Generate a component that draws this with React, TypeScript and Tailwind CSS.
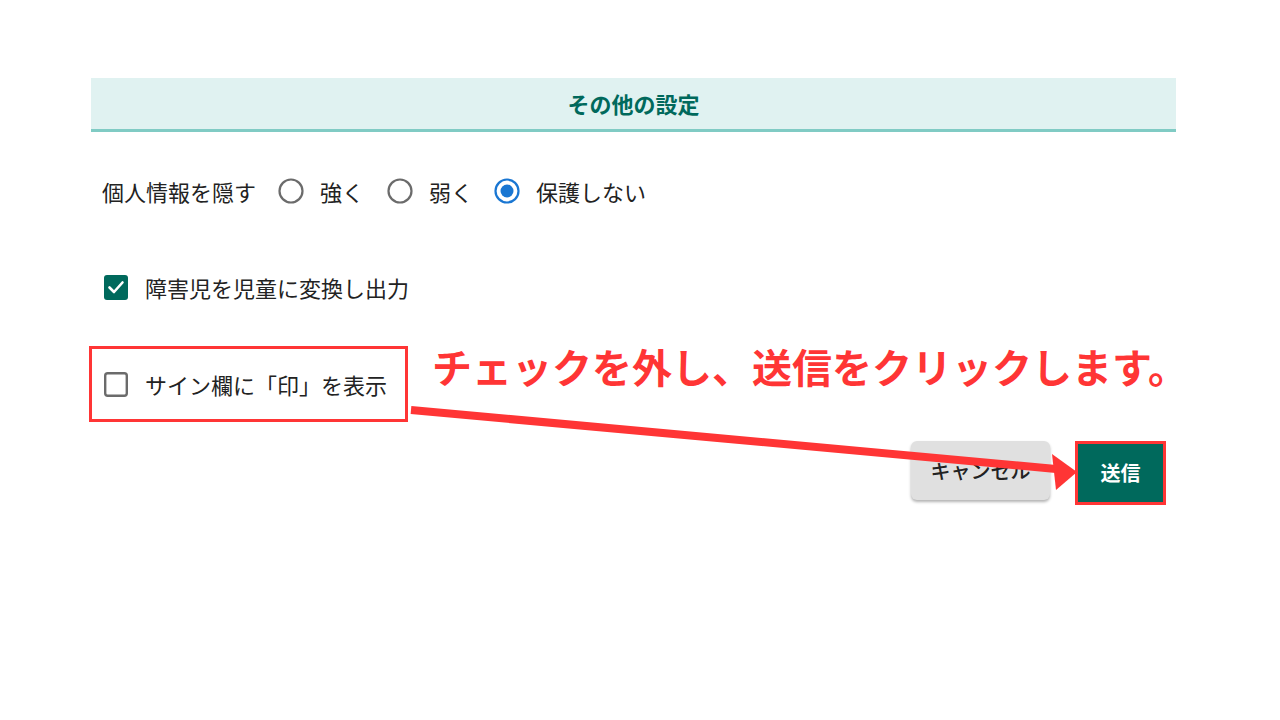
import React from "react";

const jp = "font-['Noto_Sans_CJK_JP','Noto_Sans',sans-serif]";

function Radio({ checked }: { checked?: boolean }) {
  return (
    <svg width="26" height="26" viewBox="0 0 26 26" className="shrink-0">
      <circle
        cx="13"
        cy="13"
        r="11.5"
        fill="none"
        stroke={checked ? "#1976d2" : "#6b6b6b"}
        strokeWidth="2.2"
      />
      {checked && <circle cx="13" cy="13" r="6.5" fill="#1976d2" />}
    </svg>
  );
}

function Checkbox({ checked }: { checked?: boolean }) {
  if (checked) {
    return (
      <svg width="24" height="25" viewBox="0 0 24 25" className="shrink-0">
        <rect x="0" y="0" width="24" height="25" rx="3" fill="#00695c" />
        <polyline
          points="5.5,12.5 10,17 18.5,7.5"
          fill="none"
          stroke="#fff"
          strokeWidth="2.6"
          strokeLinecap="round"
          strokeLinejoin="round"
        />
      </svg>
    );
  }
  return (
    <svg width="24" height="25" viewBox="0 0 24 25" className="shrink-0">
      <rect
        x="1.2"
        y="1.2"
        width="21.6"
        height="22.6"
        rx="2.5"
        fill="#fff"
        stroke="#6b6b6b"
        strokeWidth="2.4"
      />
    </svg>
  );
}

export default function App() {
  return (
    <div className={`relative w-[1280px] h-[720px] bg-white overflow-hidden ${jp}`}>
      <div className="ml-[91px] w-[1085px] pt-[78px]">
        {/* section header */}
        <div className="h-[54px] bg-[#e0f2f1] border-b-[3px] border-[#80cbc4] flex items-center justify-center">
          <span className="text-[22px] font-bold text-[#00695c]">その他の設定</span>
        </div>

        {/* privacy */}
        <div className="mt-[39px] h-[40px] flex items-center pl-[11px] text-[22px] text-[#222]">
          <span>個人情報を隠す</span>
          <div className="ml-[22px] flex items-center gap-[16px]">
            <Radio />
            <span>強く</span>
          </div>
          <div className="ml-[23px] flex items-center gap-[16px]">
            <Radio />
            <span>弱く</span>
          </div>
          <div className="ml-[21px] flex items-center gap-[16px]">
            <Radio checked />
            <span>保護しない</span>
          </div>
        </div>

        {/* convert */}
        <div className="mt-[56px] h-[40px] flex items-center gap-[17px] pl-[13px] text-[22px] text-[#222]">
          <Checkbox checked />
          <span>障害児を児童に変換し出力</span>
        </div>

        {/* sign */}
        <div className="mt-[39px] flex items-start">
          <div className="shrink-0 -ml-[2px] w-[319px] h-[76px] border-[3px] border-[#ff3535] flex items-center gap-[17px] pl-[12px] text-[22px] text-[#222] whitespace-nowrap">
            <Checkbox />
            <span>サイン欄に「印」を表示</span>
          </div>
          <div className="shrink-0 ml-[24px] -mt-[3px] leading-[46px] text-[40px] font-bold text-[#ff3535] whitespace-nowrap">
            チェックを外し、送信をクリックします。
          </div>
        </div>

        {/* buttons */}
        <div className="mt-[19px] flex justify-end items-start gap-[25px] pr-[10px]">
          <button className="w-[139px] h-[59px] rounded-md bg-[#e0e0e0] shadow-[0_2px_3px_rgba(0,0,0,0.3)] text-[20px] font-medium text-[#222]">
            キャンセル
          </button>
          <div className="border-[3px] border-[#ff3535]">
            <button className="w-[85px] h-[58px] bg-[#00695c] text-white text-[20px] font-bold block">
              送信
            </button>
          </div>
        </div>
      </div>

      {/* annotation arrow */}
      <svg className="absolute inset-0 pointer-events-none" width="1280" height="720">
        <line x1="411" y1="410" x2="1056" y2="469" stroke="#ff3535" strokeWidth="8" />
        <polygon points="1052,454 1056,490 1077,472" fill="#ff3535" />
      </svg>
    </div>
  );
}
